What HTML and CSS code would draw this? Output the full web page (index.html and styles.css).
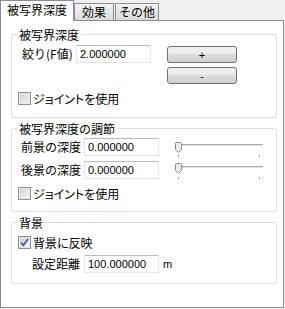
FILE: index.html
```html
<!DOCTYPE html>
<html>
<head>
<meta charset="UTF-8" />
<title>被写界深度</title>
<link rel="stylesheet" href="styles.css">
</head>
<body>
<div class="dialog">
    <div class="tabs">
        <div class="tab active">被写界深度</div>
        <div class="tab tab-fx">効果</div>
        <div class="tab tab-etc">その他</div>
    </div>
    <div class="panel">

        <!-- 被写界深度 -->
        <fieldset class="group g-dof">
            <legend>被写界深度</legend>
            <div class="row row-f">
                <span class="label lbl-f">絞り(F値)</span>
                <input class="num" type="text" value="2.000000">
                <div class="buttons">
                    <button class="btn">+</button>
                    <button class="btn">-</button>
                </div>
            </div>
            <div class="check">
                <span class="box"></span>
                <span class="check-text">ジョイントを使用</span>
            </div>
        </fieldset>

        <!-- 被写界深度の調節 -->
        <fieldset class="group g-adj">
            <legend>被写界深度の調節</legend>
            <div class="row">
                <span class="label lbl-depth">前景の深度</span>
                <input class="num" type="text" value="0.000000">
                <svg class="slider" width="90" height="20" viewBox="0 0 90 20">
                    <rect x="0" y="6" width="88" height="1" fill="#a9a9a9"/>
                    <rect x="0" y="7" width="88" height="1" fill="#e2e4e4"/>
                    <rect x="3" y="17" width="1" height="2" fill="#a0a0a0"/>
                    <rect x="84" y="17" width="1" height="2" fill="#a0a0a0"/>
                    <path d="M0.5 5.5 Q0.5 4.5 1.5 4.5 H5.5 Q6.5 4.5 6.5 5.5 V11.5 L3.5 14.5 L0.5 11.5 Z" fill="#ececec" stroke="#8a8a8a"/>
                </svg>
            </div>
            <div class="row row-next">
                <span class="label lbl-depth">後景の深度</span>
                <input class="num" type="text" value="0.000000">
                <svg class="slider" width="90" height="20" viewBox="0 0 90 20">
                    <rect x="0" y="5" width="88" height="1" fill="#a9a9a9"/>
                    <rect x="0" y="6" width="88" height="1" fill="#e2e4e4"/>
                    <rect x="3" y="16" width="1" height="2" fill="#a0a0a0"/>
                    <rect x="84" y="16" width="1" height="2" fill="#a0a0a0"/>
                    <path d="M0.5 3.5 Q0.5 2.5 1.5 2.5 H5.5 Q6.5 2.5 6.5 3.5 V9.5 L3.5 12.5 L0.5 9.5 Z" fill="#ececec" stroke="#8a8a8a"/>
                </svg>
            </div>
            <div class="check">
                <span class="box"></span>
                <span class="check-text">ジョイントを使用</span>
            </div>
        </fieldset>

        <!-- 背景 -->
        <fieldset class="group g-bg">
            <legend>背景</legend>
            <div class="check">
                <span class="box">
                    <svg width="11" height="11" viewBox="0 0 11 11">
                        <path d="M2 5.5 L4.3 8.2 L9 2" fill="none" stroke="#4a5a96" stroke-width="1.8"/>
                    </svg>
                </span>
                <span class="check-text">背景に反映</span>
            </div>
            <div class="row row-dist">
                <span class="label lbl-dist">設定距離</span>
                <input class="num" type="text" value="100.000000">
                <span class="unit">m</span>
            </div>
        </fieldset>

    </div>
</div>
</body>
</html>
```

FILE: styles.css
```css
html, body{
    margin:0px;
    padding:0px;
}
body{
    background:#f0f0f0;
    color:#000;
    font:12px "Noto Sans CJK JP", sans-serif;
}

.dialog{
    width:284px;
}

/* tabs */
.tabs{
    display:flex;
    align-items:flex-end;
    height:20px;
}
.tab{
    box-sizing:border-box;
    border:1px solid #898c95;
    border-bottom:none;
    text-align:center;
    background:linear-gradient(#f3f3f3, #e8e8e8 50%, #dadada);
    height:17px;
    line-height:16px;
}
.tab.active{
    position:relative;
    z-index:1;
    width:74px;
    height:21px;
    margin-bottom:-1px;
    line-height:18px;
    background:#fff;
}
.tab-fx{
    width:40px;
}
.tab-etc{
    width:44px;
    margin-left:1px;
}

/* panel */
.panel{
    box-sizing:border-box;
    width:284px;
    height:288px;
    border:1px solid #898c95;
    background:#fff;
    padding:0px 6px 0px 10px;
}

.group{
    margin:4px 0px 0px 0px;
    padding:0px;
    border:1px solid #d5dfe5;
    border-radius:3px;
    min-width:0px;
}
.group legend{
    margin-left:5px;
    padding:0px 2px;
    line-height:13px;
}
.g-dof{
    margin-top:7px;
    padding-bottom:12px;
}
.g-adj{
    padding-bottom:11px;
}
.g-bg{
    padding-bottom:10px;
}

.row{
    display:flex;
    align-items:flex-start;
    height:18px;
    line-height:18px;
}
.row-f{
    padding-top:4px;
    height:auto;
}
.g-adj .row{
    margin-top:3px;
}
.g-adj .row-next{
    margin-top:5px;
}
.row-dist{
    margin-top:6px;
}

.label{
    white-space:nowrap;
}
.lbl-f{
    margin-left:10px;
    width:54px;
}
.lbl-depth{
    margin-left:9px;
    width:63px;
}
.lbl-dist{
    margin-left:20px;
    width:52px;
}

.num{
    box-sizing:border-box;
    width:75px;
    height:18px;
    margin:0px;
    padding:0px 0px 0px 3px;
    border:1px solid #e2e6ec;
    border-top-color:#b5bac2;
    font:11px "Liberation Sans", Arial, sans-serif;
    color:#000;
    background:#fff;
    outline:none;
}

.buttons{
    display:flex;
    flex-direction:column;
    gap:4px;
    margin:1px 0px 0px 16px;
}
.btn{
    box-sizing:border-box;
    width:70px;
    height:17px;
    margin:0px;
    padding:0px;
    border:1px solid #707070;
    border-radius:3px;
    background:linear-gradient(#f2f2f2, #ebebeb 45%, #dddddd 50%, #cfcfcf);
    font:11px "Liberation Sans", Arial, sans-serif;
    line-height:14px;
    color:#000;
}

.slider{
    display:block;
    margin-left:16px;
}

.unit{
    margin-left:4px;
    font:11px "Liberation Sans", Arial, sans-serif;
    line-height:18px;
}

/* checkboxes */
.check{
    display:flex;
    align-items:center;
    height:13px;
    margin:8px 0px 0px 6px;
    line-height:13px;
}
.g-bg .check{
    margin-top:7px;
}
.box{
    box-sizing:border-box;
    display:flex;
    align-items:center;
    justify-content:center;
    width:13px;
    height:13px;
    border:1px solid #8e8f8f;
    background:linear-gradient(135deg, #cfcfcf, #f7f7f7);
    box-shadow:inset 0 0 0 1px #e9e9e9;
}
.check-text{
    margin-left:2px;
    white-space:nowrap;
    font-feature-settings:"palt";
}
```
